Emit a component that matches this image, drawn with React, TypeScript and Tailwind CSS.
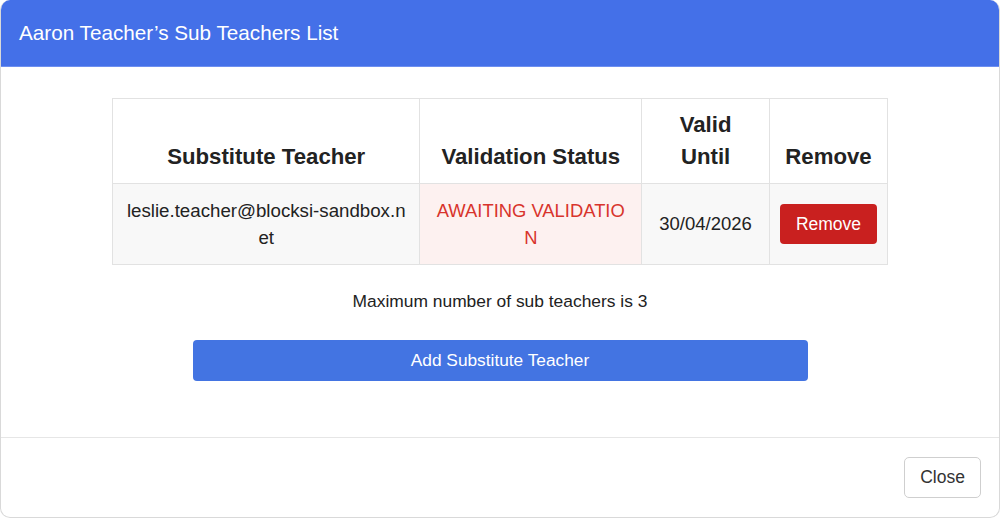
import React from 'react'

type Row = {
    email: string
    status: string
    validUntil: string
}

const rows: Row[] = [
    { email: 'leslie.teacher@blocksi-sandbox.net', status: 'AWAITING VALIDATION', validUntil: '30/04/2026' },
]

const SubTeachersModal = () => {
    return (
        <div className='flex flex-col w-[1000px] h-[518px] bg-white border-r border-b border-l border-[#d9d9d9] rounded-[10px] overflow-hidden' style={{ fontFamily: '"Liberation Sans", Arial, sans-serif' }}>
            <div className='flex items-center h-[67px] shrink-0 px-[18px] bg-[#4470e8] border-b border-[#6d8ff0]'>
                <h2 className='text-[20.7px] text-white'>Aaron Teacher’s Sub Teachers List</h2>
            </div>

            <div className='flex flex-col items-center flex-1 pt-[31px]'>
                <table className='w-[776px] border-collapse border border-[#e2e2e2] text-[#222]'>
                    <thead>
                        <tr>
                            <th className='w-[308px] border border-[#e2e2e2] align-bottom pt-[10px] pb-[10px] text-[22.2px] leading-[32px] font-bold'>Substitute Teacher</th>
                            <th className='w-[222px] border border-[#e2e2e2] align-bottom pt-[10px] pb-[10px] text-[22.2px] leading-[32px] font-bold'>Validation Status</th>
                            <th className='w-[128px] border border-[#e2e2e2] align-bottom pt-[10px] pb-[10px] px-4 text-[22.2px] leading-[32px] font-bold'>Valid Until</th>
                            <th className='w-[118px] border border-[#e2e2e2] align-bottom pt-[10px] pb-[10px] text-[22.2px] leading-[32px] font-bold'>Remove</th>
                        </tr>
                    </thead>
                    <tbody>
                        {rows.map((row) => (
                            <tr key={row.email} className='h-[81px]'>
                                <td className='border border-[#e2e2e2] bg-[#f8f8f8] px-3 py-[13px] text-center text-[18.7px] leading-[27px] break-all align-middle'>{row.email}</td>
                                <td className='border border-[#e2e2e2] bg-[#fdf1f0] px-[13px] py-[13px] text-center text-[18.4px] leading-[27px] text-[#d8342c] break-all align-middle'>{row.status}</td>
                                <td className='border border-[#e2e2e2] bg-[#f8f8f8] text-center text-[18.5px] align-middle'>{row.validUntil}</td>
                                <td className='border border-[#e2e2e2] bg-[#f8f8f8] text-center align-middle'>
                                    <button className='w-[97px] h-[40px] rounded-[4px] bg-[#c9201f] text-white text-[17.5px]'>Remove</button>
                                </td>
                            </tr>
                        ))}
                    </tbody>
                </table>

                <p className='mt-[25px] text-[17.4px] leading-[22px] text-[#222]'>Maximum number of sub teachers is 3</p>

                <button className='mt-[28px] w-[615px] h-[41px] rounded-[4px] bg-[#4374e2] text-white text-[17.3px]'>Add Substitute Teacher</button>
            </div>

            <div className='flex justify-end items-start h-[80px] shrink-0 pt-[19px] pr-[18px] border-t border-[#e6e6e6]'>
                <button className='w-[77px] h-[41px] rounded-[5px] border border-[#cfcfcf] bg-white text-[17.5px] text-[#333]'>Close</button>
            </div>
        </div>
    )
}

export default function App() {
    return <SubTeachersModal />
}
